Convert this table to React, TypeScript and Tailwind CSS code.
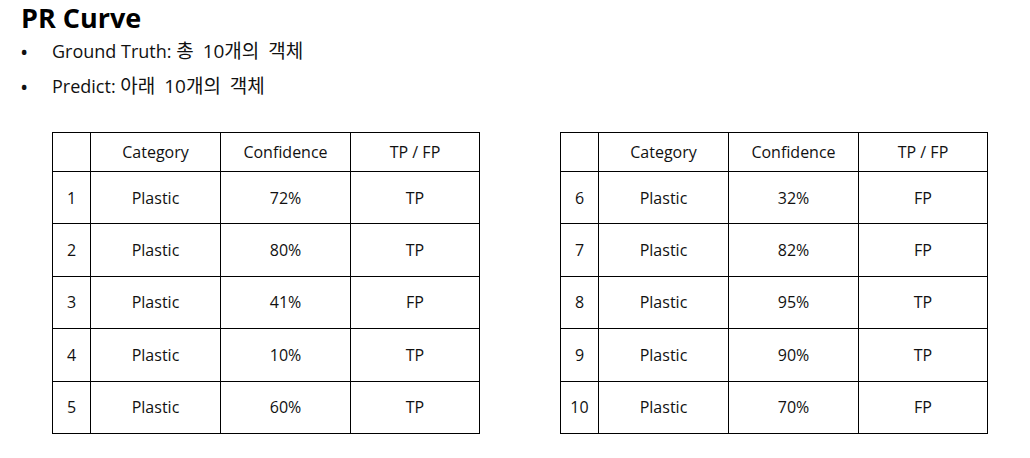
const leftRows = [
  { n: 1, conf: "72%", r: "TP" },
  { n: 2, conf: "80%", r: "TP" },
  { n: 3, conf: "41%", r: "FP" },
  { n: 4, conf: "10%", r: "TP" },
  { n: 5, conf: "60%", r: "TP" },
];

const rightRows = [
  { n: 6, conf: "32%", r: "FP" },
  { n: 7, conf: "82%", r: "FP" },
  { n: 8, conf: "95%", r: "TP" },
  { n: 9, conf: "90%", r: "TP" },
  { n: 10, conf: "70%", r: "FP" },
];

type Row = { n: number; conf: string; r: string };

const ResultTable = ({ rows }: { rows: Row[] }) => (
  <table className="border-collapse table-fixed w-[427px] text-[16px] text-[#111]">
    <colgroup>
      <col className="w-[38px]" />
      <col className="w-[130px]" />
      <col className="w-[130px]" />
      <col className="w-[129px]" />
    </colgroup>
    <thead>
      <tr className="h-[39px]">
        <th className="border border-black font-normal"></th>
        <th className="border border-black font-normal">Category</th>
        <th className="border border-black font-normal">Confidence</th>
        <th className="border border-black font-normal">TP / FP</th>
      </tr>
    </thead>
    <tbody>
      {rows.map((row) => (
        <tr key={row.n} className="h-[52.4px] text-center">
          <td className="border border-black">{row.n}</td>
          <td className="border border-black">Plastic</td>
          <td className="border border-black">{row.conf}</td>
          <td className="border border-black">{row.r}</td>
        </tr>
      ))}
    </tbody>
  </table>
);

export default function App() {
  return (
    <div
      className="w-[1030px] h-[458px] bg-white text-black overflow-hidden"
      style={{ fontFamily: '"Open Sans", "Noto Sans CJK KR", sans-serif' }}
    >
      <h1 className="pl-[21px] pt-[1px] text-[27px] font-bold leading-[34px]">PR Curve</h1>
      <ul className="-mt-[1px] text-[18px] leading-[35px] text-[#111]">
        <li className="flex items-center">
          <span className="w-[52px] pl-[20px] text-[22px]">•</span>
          <span>
            Ground Truth: <span className="text-[19px] [word-spacing:4px]">총 10개의 객체</span>
          </span>
        </li>
        <li className="flex items-center">
          <span className="w-[52px] pl-[20px] text-[22px]">•</span>
          <span>
            Predict: <span className="text-[19px] [word-spacing:4px]">아래 10개의 객체</span>
          </span>
        </li>
      </ul>
      <div className="flex gap-[80px] pl-[52px] pt-[28px]">
        <ResultTable rows={leftRows} />
        <ResultTable rows={rightRows} />
      </div>
    </div>
  );
}
